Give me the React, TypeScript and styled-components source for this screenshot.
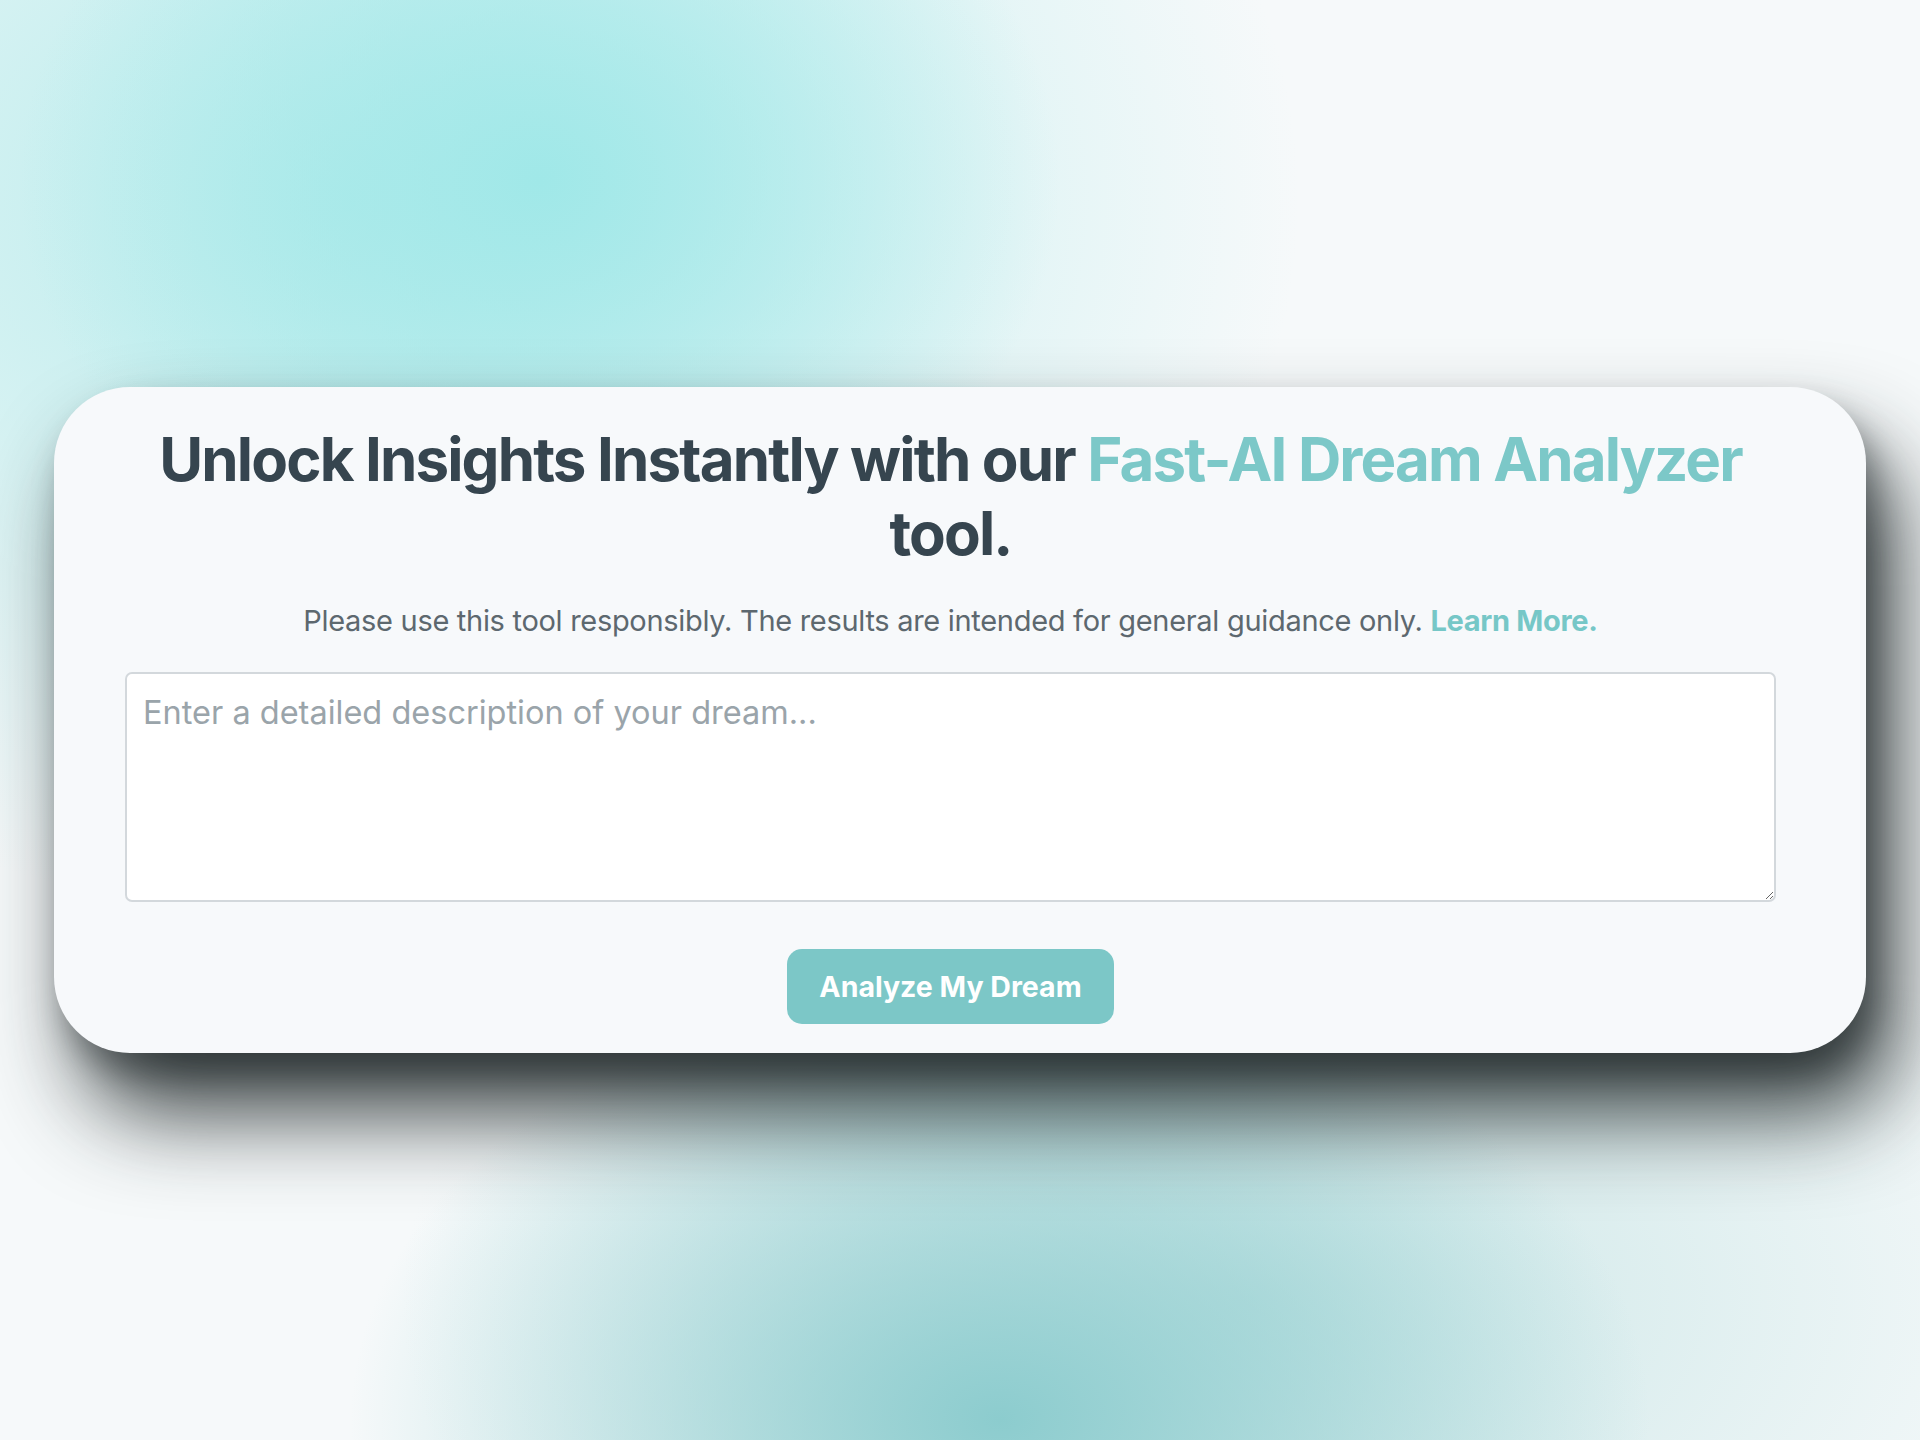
import React from "react";
import styled, { createGlobalStyle } from "styled-components";

const GlobalStyle = createGlobalStyle`
	html, body {
		margin: 0;
		padding: 0;
	}
	body {
		font-family: "Inter", "Liberation Sans", sans-serif;
	}
`;

const App: React.FC = () => {
	return (
		<Page>
			<GlobalStyle />
			<Card>
				<Heading>
					Unlock Insights Instantly with our <Accent>Fast-AI Dream Analyzer</Accent> tool.
				</Heading>
				<Notice>
					Please use this tool responsibly. The results are intended for general guidance only.{" "}
					<NoticeLink href="#">Learn More.</NoticeLink>
				</Notice>
				<DreamInput placeholder="Enter a detailed description of your dream..." />
				<AnalyzeButton type="button">Analyze My Dream</AnalyzeButton>
			</Card>
		</Page>
	);
};

const Page = styled.main`
	width: 1920px;
	height: 1440px;
	box-sizing: border-box;
	padding-top: 387px;
	padding-left: 54px;
	overflow: hidden;
	background:
		radial-gradient(ellipse 520px 420px at 540px 180px, rgba(160, 232, 232, 1), rgba(160, 232, 232, 0) 100%),
		radial-gradient(ellipse 650px 440px at 1000px 1420px, rgba(140, 204, 206, 1), rgba(140, 204, 206, 0) 100%),
		radial-gradient(ellipse 950px 720px at 350px 200px, rgba(176, 234, 234, 0.9), rgba(176, 234, 234, 0) 100%),
		radial-gradient(ellipse 850px 500px at 1250px 1300px, rgba(170, 216, 216, 0.6), rgba(170, 216, 216, 0) 100%),
		#f6f9fa;
`;

const Card = styled.section`
	width: 1812px;
	box-sizing: border-box;
	padding: 35px 90px 29px 71px;
	background: #f7f9fb;
	border-radius: 76px;
	box-shadow:
		28px 60px 90px rgba(22, 30, 32, 0.85),
		10px 20px 30px rgba(22, 30, 32, 0.35);
	display: flex;
	flex-direction: column;
	align-items: center;
`;

const Heading = styled.h1`
	margin: 0;
	font-size: 60px;
	line-height: 74px;
	font-weight: 700;
	letter-spacing: -1.85px;
	color: #36454f;
	text-align: center;
`;

const Accent = styled.span`
	color: #7cc8c8;
`;

const Notice = styled.p`
	margin: 33px 0 0;
	font-size: 29px;
	line-height: 36px;
	letter-spacing: -0.3px;
	color: #5d686f;
	text-align: center;
`;

const NoticeLink = styled.a`
	color: #76c7c7;
	font-weight: 700;
	text-decoration: none;
`;

const DreamInput = styled.textarea`
	margin-top: 33px;
	width: 100%;
	height: 230px;
	box-sizing: border-box;
	padding: 18px 16px;
	border: 2px solid #d3d8dc;
	border-radius: 7px;
	background: #ffffff;
	font-family: "Inter", "Liberation Sans", sans-serif;
	font-size: 32.5px;
	line-height: 42px;
	color: #36454f;
	resize: vertical;
	outline: none;

	&::placeholder {
		color: #9aa4aa;
	}
`;

const AnalyzeButton = styled.button`
	margin-top: 47px;
	width: 327px;
	height: 75px;
	border: none;
	border-radius: 15px;
	background: #7cc7c7;
	color: #ffffff;
	font-family: "Inter", "Liberation Sans", sans-serif;
	font-size: 28.5px;
	font-weight: 700;
	cursor: pointer;
`;

export default App;
